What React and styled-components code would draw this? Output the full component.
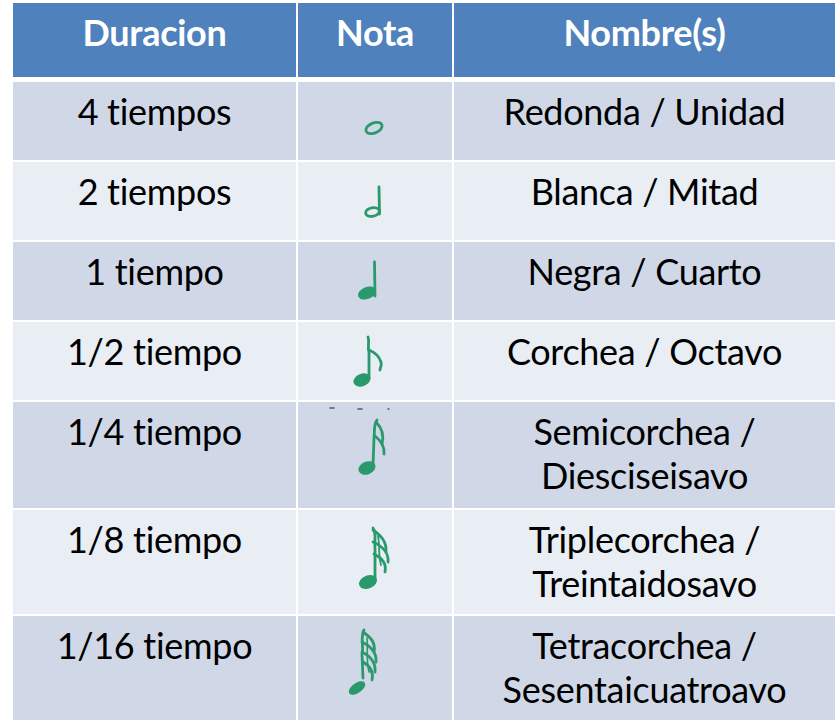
import styled, { createGlobalStyle } from "styled-components";

const Global = createGlobalStyle`
  html, body {
    margin: 0;
    padding: 0;
    background: #ffffff;
  }
  body {
    font-family: Lato, "Open Sans", "Liberation Sans", sans-serif;
  }
`;

const Page = styled.div`
  width: 840px;
  height: 727px;
  padding: 3px 0 0 13px;
  box-sizing: border-box;
  background: #ffffff;
`;

const Table = styled.div`
  width: 822px;
  display: flex;
  flex-direction: column;
  gap: 2px;
`;

const Row = styled.div`
  display: grid;
  grid-template-columns: 283px 154px 381px;
  column-gap: 2px;
  min-height: ${({ $height }) => $height}px;
  margin-bottom: ${({ $head }) => ($head ? "3px" : "0")};
`;

const HeadCell = styled.div`
  background: #4f81bd;
  color: #ffffff;
  font-weight: 700;
  font-size: 36px;
  letter-spacing: -0.3px;
  display: flex;
  align-items: center;
  justify-content: center;
  padding-bottom: 16px;
  box-sizing: border-box;
`;

const Cell = styled.div`
  background: ${({ $odd }) => ($odd ? "#d0d8e8" : "#e9edf4")};
  color: #000000;
  font-size: 36px;
  letter-spacing: -0.3px;
  line-height: 44px;
  text-align: center;
  padding-top: 7px;
  box-sizing: border-box;
`;

const NoteCell = styled.div`
  background: ${({ $odd }) => ($odd ? "#d0d8e8" : "#e9edf4")};
`;

const NoteSvg = styled.svg`
  display: block;
  width: 154px;
  fill: none;
  stroke: #2a9a6c;
  stroke-width: 2.8;
  stroke-linecap: round;
  stroke-linejoin: round;
`;

const green = "#2a9a6c";

const Head = ({ cx, cy, filled, rx = 8, ry = 5, rot = -22 }) => (
  <ellipse
    cx={cx}
    cy={cy}
    rx={rx}
    ry={ry}
    transform={`rotate(${rot} ${cx} ${cy})`}
    fill={filled ? green : "none"}
  />
);

const notes = [
  <g key="w">
    <Head cx={76} cy={46} rx={8.5} ry={5} />
  </g>,
  <g key="h">
    <path d="M81 25 L81.5 52" />
    <Head cx={74.5} cy={50} rx={7} ry={4.3} rot={-12} />
  </g>,
  <g key="q">
    <path d="M76.5 20 L77 54" />
    <Head cx={69} cy={51} rx={8} ry={4.6} filled />
  </g>,
  <g key="e">
    <path d="M70 15 C72 20 69 24 71 30 L71 56" />
    <path d="M71 28 C76 30 81 34 83 40 C84 44 82 46 82 48" />
    <Head cx={64} cy={58} rx={7.5} ry={4.8} filled />
  </g>,
  <g key="s">
    <path d="M32 6 h4 M60 7 h4 M90 7 h1" stroke="#556" strokeWidth="1.4" />
    <path d="M79 18 C75 24 77 30 76 36 L75 64" />
    <path d="M78 20 C84 26 86 34 84 42" />
    <path d="M77 34 C82 38 87 44 86 52" />
    <Head cx={69} cy={66} rx={7.5} ry={5} filled />
  </g>,
  <g key="t">
    <path d="M75 18 C79 24 76 32 77 38 L77 70" />
    <path d="M75 20 C82 25 89 31 88 42" />
    <path d="M75 32 C84 36 91 43 90 52" />
    <path d="M76 44 C84 48 89 53 87 62" />
    <path d="M80 26 C82 34 80 44 83 55" strokeWidth="1.8" />
    <Head cx={70} cy={72} rx={8} ry={5} filled />
  </g>,
  <g key="x">
    <path d="M66 14 C62 22 66 30 64 38 L65 62" />
    <path d="M65 16 C72 21 78 26 76 36" />
    <path d="M64 26 C72 30 79 36 78 46" />
    <path d="M64 36 C72 40 78 46 77 56" />
    <path d="M65 46 C72 50 76 55 74 64" />
    <path d="M69 22 C70 32 68 44 71 56" strokeWidth="1.6" />
    <Head cx={59} cy={72} rx={8} ry={3.6} rot={-35} filled />
  </g>,
];

const rows = [
  { dur: "4 tiempos", names: ["Redonda / Unidad"], h: 78 },
  { dur: "2 tiempos", names: ["Blanca / Mitad"], h: 78 },
  { dur: "1 tiempo", names: ["Negra / Cuarto"], h: 78 },
  { dur: "1/2 tiempo", names: ["Corchea / Octavo"], h: 78 },
  { dur: "1/4 tiempo", names: ["Semicorchea /", "Diesciseisavo"], h: 106 },
  { dur: "1/8 tiempo", names: ["Triplecorchea /", "Treintaidosavo"], h: 104 },
  { dur: "1/16 tiempo", names: ["Tetracorchea /", "Sesentaicuatroavo"], h: 104 },
];

export default function App() {
  return (
    <Page>
      <Global />
      <Table>
        <Row $height={74} $head>
          <HeadCell>Duracion</HeadCell>
          <HeadCell>Nota</HeadCell>
          <HeadCell>Nombre(s)</HeadCell>
        </Row>
        {rows.map((row, i) => (
          <Row key={row.dur} $height={row.h}>
            <Cell $odd={i % 2 === 0}>{row.dur}</Cell>
            <NoteCell $odd={i % 2 === 0}>
              <NoteSvg viewBox={`0 0 154 ${row.h}`} height={row.h}>
                {notes[i]}
              </NoteSvg>
            </NoteCell>
            <Cell $odd={i % 2 === 0}>
              {row.names.map((n) => (
                <div key={n}>{n}</div>
              ))}
            </Cell>
          </Row>
        ))}
      </Table>
    </Page>
  );
}
